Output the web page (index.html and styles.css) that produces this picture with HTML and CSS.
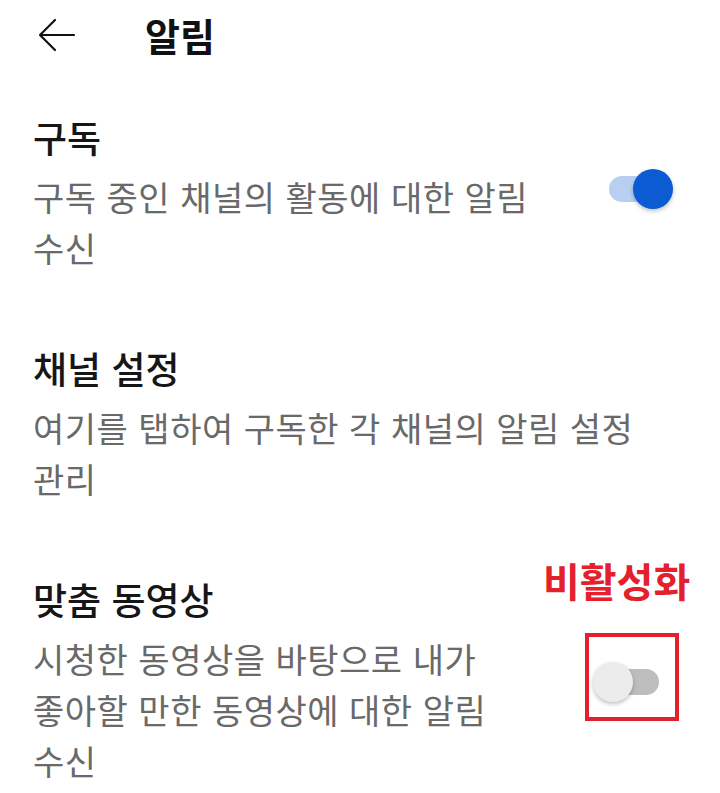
FILE: index.html
```html
<!DOCTYPE html>
<html lang="ko">
<head>
    <meta charset="UTF-8">
    <title>알림</title>
    <meta name="viewport" content="width=device-width, initial-scale=1.0">
    <link rel="stylesheet" href="styles.css">
</head>
<body>

<header class="topbar">
    <button class="back" aria-label="뒤로">
        <svg width="38" height="34" viewBox="0 0 38 34" fill="none" stroke="#111" stroke-width="2.2" stroke-linecap="round" stroke-linejoin="round">
            <path d="M2 17 H36 M17 2 L2 17 L17 32"/>
        </svg>
    </button>
    <h1 class="title">알림</h1>
</header>

<ul class="settings">
    <li class="item">
        <div class="text">
            <div class="name">구독</div>
            <div class="desc">구독 중인 채널의 활동에 대한 알림 수신</div>
        </div>
        <div class="toggle on"><span class="track"></span><span class="thumb"></span></div>
    </li>
    <li class="item">
        <div class="text">
            <div class="name">채널 설정</div>
            <div class="desc">여기를 탭하여 구독한 각 채널의 알림 설정 관리</div>
        </div>
    </li>
    <li class="item">
        <div class="text">
            <div class="name">맞춤 동영상</div>
            <div class="desc">시청한 동영상을 바탕으로 내가 좋아할 만한 동영상에 대한 알림 수신</div>
        </div>
        <div class="toggle">
            <span class="track"></span><span class="thumb"></span>
            <span class="mark"></span>
            <span class="mark-label">비활성화</span>
        </div>
    </li>
</ul>

</body>
</html>
```

FILE: styles.css
```css
body {
    margin: 0;
    background: #fff;
    font-family: 'Noto Sans CJK KR', 'Noto Sans', sans-serif;
    color: #111;
    word-break: keep-all;
}

.topbar {
    display: flex;
    align-items: center;
    height: 70px;
    padding-left: 38px;
}

.back {
    display: flex;
    padding: 0;
    border: none;
    background: none;
}

.title {
    margin: 0 0 0 69px;
    font-size: 38px;
    font-weight: 700;
    line-height: 44px;
}

.settings {
    list-style: none;
    margin: 0;
    padding: 45px 47px 0 33px;
    display: flex;
    flex-direction: column;
    gap: 73px;
}

.item {
    display: flex;
    align-items: center;
    gap: 43px;
}

.text {
    flex: 1;
}

.name {
    font-size: 37px;
    font-weight: 500;
    line-height: 44px;
    color: #161616;
}

.desc {
    margin-top: 12px;
    font-size: 34px;
    letter-spacing: 0.5px;
    line-height: 51px;
    color: #696969;
}

/* switch: pill track with a round thumb on top */
.toggle {
    position: relative;
    flex: none;
    width: 80px;
    height: 40px;
}

.track {
    position: absolute;
    left: 16px;
    top: 7px;
    width: 50px;
    height: 26px;
    border-radius: 13px;
    background: #bdbdbd;
}

.thumb {
    position: absolute;
    left: 0;
    top: 0;
    width: 40px;
    height: 40px;
    border-radius: 50%;
    background: #ececec;
    box-shadow: 0 2px 4px rgba(0, 0, 0, 0.25);
}

.toggle.on {
    top: -5px;
}

.toggle.on .track {
    background: #b9cff1;
}

.toggle.on .thumb {
    left: auto;
    right: 0;
    background: #0b5bd3;
}

/* red annotation around the disabled switch */
.mark {
    position: absolute;
    left: -8px;
    top: -29px;
    width: 94px;
    height: 88px;
    box-sizing: border-box;
    border: 4px solid #e3202b;
}

.mark-label {
    position: absolute;
    left: -50px;
    top: -108px;
    font-size: 40px;
    font-weight: 700;
    line-height: 52px;
    color: #e3202b;
    white-space: nowrap;
}
```
